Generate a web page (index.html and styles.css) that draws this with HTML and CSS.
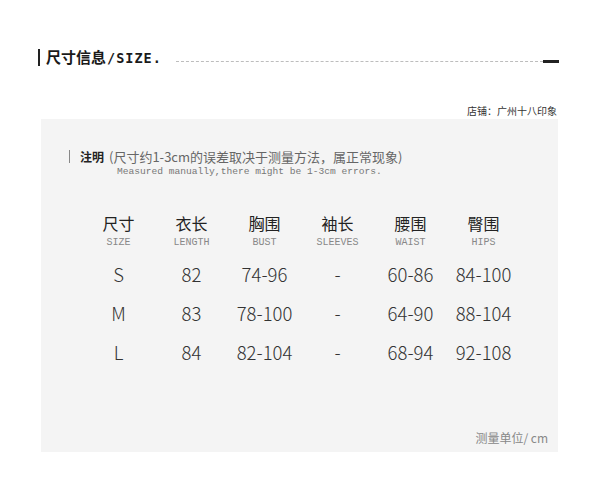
FILE: index.html
```html
<!DOCTYPE html>
<html lang="zh">
<head>
<meta charset="utf-8">
<link rel="stylesheet" href="styles.css">
</head>
<body>
<div class="page">
  <div class="title-row">
    <span class="title-bar"></span>
    <span class="title"><span class="title-cn">尺寸信息</span><span class="title-en">/SIZE.</span></span>
    <span class="dash-line"></span>
    <span class="dash-end"></span>
  </div>
  <div class="shop">店铺：广州十八印象</div>
  <div class="panel">
    <div class="note">
      <span class="note-bar"></span>
      <span class="note-label">注明</span>
      <span class="note-text">(尺寸约1-3cm的误差取决于测量方法，属正常现象)</span>
    </div>
    <div class="note-en">Measured manually,there might be 1-3cm errors.</div>
    <div class="table">
      <div class="th"><div class="cn">尺寸</div><div class="en">SIZE</div></div>
      <div class="th"><div class="cn">衣长</div><div class="en">LENGTH</div></div>
      <div class="th"><div class="cn">胸围</div><div class="en">BUST</div></div>
      <div class="th"><div class="cn">袖长</div><div class="en">SLEEVES</div></div>
      <div class="th"><div class="cn">腰围</div><div class="en">WAIST</div></div>
      <div class="th"><div class="cn">臀围</div><div class="en">HIPS</div></div>

      <div class="td">S</div><div class="td">82</div><div class="td">74-96</div><div class="td">-</div><div class="td">60-86</div><div class="td">84-100</div>
      <div class="td">M</div><div class="td">83</div><div class="td">78-100</div><div class="td">-</div><div class="td">64-90</div><div class="td">88-104</div>
      <div class="td">L</div><div class="td">84</div><div class="td">82-104</div><div class="td">-</div><div class="td">68-94</div><div class="td">92-108</div>
    </div>
    <div class="unit">测量单位/ cm</div>
  </div>
</div>
</body>
</html>
```
FILE: styles.css
```css
html, body {
  margin: 0;
  padding: 0;
  background: #ffffff;
}
.page {
  width: 600px;
  height: 491px;
  font-family: "Noto Sans CJK SC", "Noto Sans", sans-serif;
  color: #222;
  box-sizing: border-box;
  padding-top: 46px;
}
.title-row {
  display: flex;
  align-items: center;
  height: 22px;
  padding-left: 38px;
  padding-right: 41px;
}
.title-bar {
  width: 2px;
  height: 17px;
  background: #222;
  margin-right: 6px;
}
.title {
  font-size: 15px;
  font-weight: 700;
  line-height: 22px;
  color: #1a1a1a;
  white-space: nowrap;
}
.title-en {
  font-family: "DejaVu Sans Mono", monospace;
  font-size: 13.5px;
  font-weight: 700;
  letter-spacing: 1px;
  margin-left: 1px;
}
.dash-line {
  flex: 1;
  margin-left: 14px;
  height: 0;
  border-top: 1px dashed #bdbdbd;
  margin-top: 9px;
}
.dash-end {
  width: 16px;
  height: 3px;
  background: #222;
  margin-top: 9px;
}
.shop {
  margin-top: 36px;
  text-align: right;
  padding-right: 43px;
  font-size: 10px;
  line-height: 14px;
  color: #333;
}
.panel {
  margin: 1px 42px 0 41px;
  height: 333px;
  background: #f4f4f4;
  box-sizing: border-box;
  padding: 29px 0 0 0;
  position: relative;
}
.note {
  display: flex;
  align-items: center;
  padding-left: 28px;
  height: 16px;
  white-space: nowrap;
}
.note-bar {
  width: 1px;
  height: 13px;
  background: #888;
  margin-right: 10px;
}
.note-label {
  font-size: 12px;
  font-weight: 700;
  color: #222;
  margin-right: 5px;
}
.note-text {
  font-size: 13px;
  color: #666;
}
.note-en {
  padding-left: 76px;
  margin-top: 2px;
  font-family: "Liberation Mono", monospace;
  font-size: 9.6px;
  line-height: 12px;
  color: #777;
}
.table {
  display: grid;
  grid-template-columns: repeat(6, 73px);
  grid-template-rows: 48px;
  grid-auto-rows: 39px;
  margin-left: 41px;
  margin-top: 35px;
}
.th {
  grid-row: 1;
  text-align: center;
}
.th .cn {
  font-size: 16px;
  line-height: 20px;
  color: #222;
}
.th .en {
  font-family: "Liberation Mono", monospace;
  font-size: 10px;
  line-height: 14px;
  color: #888;
  margin-top: 3px;
}
.td {
  text-align: center;
  font-size: 18.5px;
  line-height: 26px;
  font-weight: 300;
  color: #333;
}
.unit {
  position: absolute;
  right: 10px;
  bottom: 6px;
  font-size: 12px;
  line-height: 16px;
  color: #888;
}
```
